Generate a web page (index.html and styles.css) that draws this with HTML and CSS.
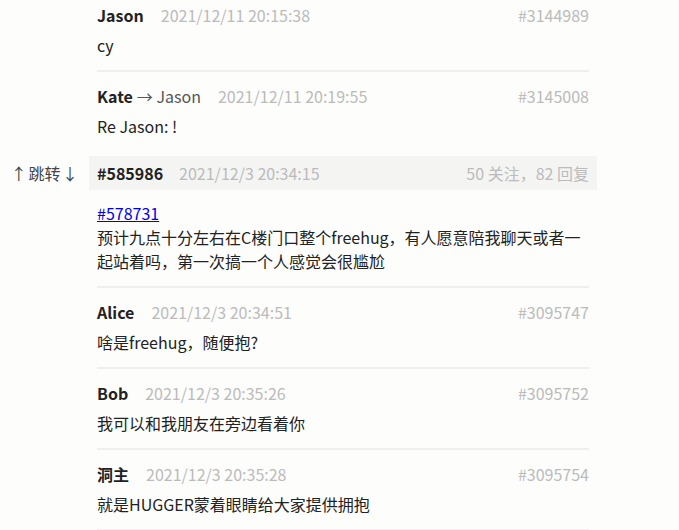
FILE: index.html
```html
<!DOCTYPE html>
<html lang="zh-CN">
<head>
<meta charset="utf-8">
<link rel="stylesheet" href="styles.css">
</head>
<body>
<div class="page">
  <div class="replies clipped">
    <div class="item first">
      <div class="meta">
        <span class="name">Jason</span>
        <span class="time">2021/12/11 20:15:38</span>
        <span class="pid">#3144989</span>
      </div>
      <div class="text">cy</div>
    </div>
    <div class="item">
      <div class="meta">
        <span class="name">Kate</span><span class="to">→ Jason</span>
        <span class="time">2021/12/11 20:19:55</span>
        <span class="pid">#3145008</span>
      </div>
      <div class="text">Re Jason: !</div>
    </div>
  </div>

  <div class="thread">
    <div class="thread-row">
      <div class="jump">↑ 跳转 ↓</div>
      <div class="thread-bar">
        <span class="tid">#585986</span>
        <span class="time">2021/12/3 20:34:15</span>
        <span class="stats">50 关注，82 回复</span>
      </div>
    </div>
    <div class="replies">
      <div class="item op">
        <div class="text"><a href="#" class="ref">#578731</a><br>预计九点十分左右在C楼门口整个freehug，有人愿意陪我聊天或者一起站着吗，第一次搞一个人感觉会很尴尬</div>
      </div>
      <div class="item">
        <div class="meta">
          <span class="name">Alice</span>
          <span class="time">2021/12/3 20:34:51</span>
          <span class="pid">#3095747</span>
        </div>
        <div class="text">啥是freehug，随便抱?</div>
      </div>
      <div class="item">
        <div class="meta">
          <span class="name">Bob</span>
          <span class="time">2021/12/3 20:35:26</span>
          <span class="pid">#3095752</span>
        </div>
        <div class="text">我可以和我朋友在旁边看着你</div>
      </div>
      <div class="item">
        <div class="meta">
          <span class="name">洞主</span>
          <span class="time">2021/12/3 20:35:28</span>
          <span class="pid">#3095754</span>
        </div>
        <div class="text">就是HUGGER蒙着眼睛给大家提供拥抱</div>
      </div>
      <div class="item end"></div>
    </div>
  </div>
</div>
</body>
</html>
```

FILE: styles.css
```css
html, body {
  margin: 0;
  padding: 0;
  background: #fdfdfb;
}
body {
  font-family: "Noto Sans CJK SC", "Noto Sans", sans-serif;
  font-size: 16px;
  line-height: 24px;
  color: #222;
  overflow: hidden;
  height: 530px;
}
.page {
  width: 679px;
}
.replies {
  margin-left: 97px;
  width: 492px;
}
.clipped {
  margin-top: -11px;
}
.item {
  border-top: 2px solid #efefef;
  padding: 12px 0 13px;
}
.item.first {
  border-top-color: transparent;
}
.item.end {
  padding: 0;
}
.meta {
  display: flex;
  align-items: center;
  height: 24px;
  margin-bottom: 6px;
  white-space: nowrap;
}
.name {
  font-weight: 700;
  color: #222;
}
.to {
  color: #555;
  margin-left: 4px;
}
.time {
  color: #bbb;
  margin-left: 17px;
}
.pid {
  margin-left: auto;
  color: #bbb;
}
.text {
  color: #222;
}
.thread {
  margin-top: 5px;
}
.thread-row {
  display: flex;
  align-items: center;
}
.jump {
  width: 89px;
  box-sizing: border-box;
  padding-right: 11px;
  text-align: right;
  color: #444;
  word-spacing: -2px;
}
.thread-bar {
  display: flex;
  align-items: center;
  width: 508px;
  height: 34px;
  box-sizing: border-box;
  padding: 0 8px;
  background: #f4f4f3;
}
.tid {
  font-weight: 700;
  color: #222;
}
.thread-bar .time {
  margin-left: 16px;
}
.stats {
  margin-left: auto;
  color: #bbb;
}
.item.op {
  border-top: none;
  padding-top: 11px;
}
.ref {
  color: #0000ee;
  text-decoration: underline;
}
```
